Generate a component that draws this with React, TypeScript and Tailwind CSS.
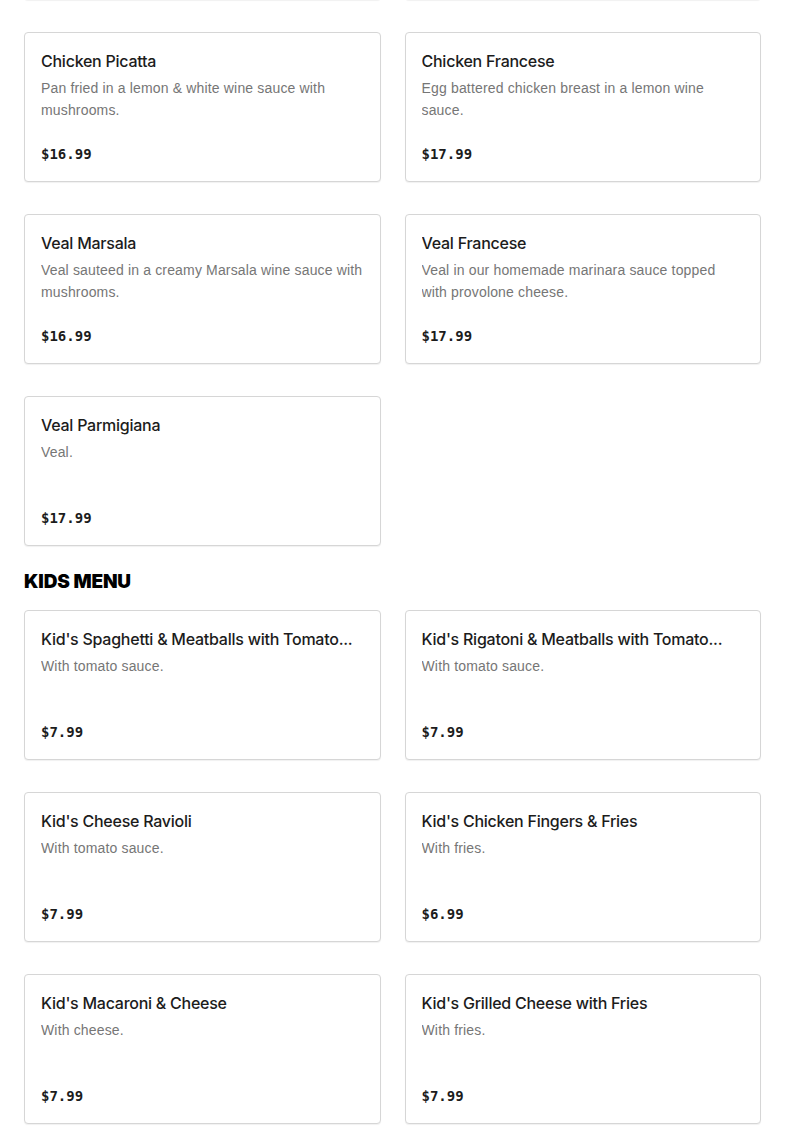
import React from "react";

type Item = { name: string; desc: string; price: string };

const entrees: Item[] = [
  { name: "Chicken Picatta", desc: "Pan fried in a lemon & white wine sauce with mushrooms.", price: "$16.99" },
  { name: "Chicken Francese", desc: "Egg battered chicken breast in a lemon wine sauce.", price: "$17.99" },
  { name: "Veal Marsala", desc: "Veal sauteed in a creamy Marsala wine sauce with mushrooms.", price: "$16.99" },
  { name: "Veal Francese", desc: "Veal in our homemade marinara sauce topped with provolone cheese.", price: "$17.99" },
  { name: "Veal Parmigiana", desc: "Veal.", price: "$17.99" },
];

const kids: Item[] = [
  { name: "Kid's Spaghetti & Meatballs with Tomato...", desc: "With tomato sauce.", price: "$7.99" },
  { name: "Kid's Rigatoni & Meatballs with Tomato...", desc: "With tomato sauce.", price: "$7.99" },
  { name: "Kid's Cheese Ravioli", desc: "With tomato sauce.", price: "$7.99" },
  { name: "Kid's Chicken Fingers & Fries", desc: "With fries.", price: "$6.99" },
  { name: "Kid's Macaroni & Cheese", desc: "With cheese.", price: "$7.99" },
  { name: "Kid's Grilled Cheese with Fries", desc: "With fries.", price: "$7.99" },
];

const cardBox =
  "flex h-[150px] min-w-0 flex-col rounded-[4px] border border-[#d6d6d6] bg-white px-4 pt-4 pb-4 shadow-[0_1px_1px_rgba(0,0,0,0.06)]";

function Card({ item }: { item: Item }) {
  return (
    <div className={cardBox}>
      <div className="truncate font-['Inter','Liberation_Sans',sans-serif] text-[16px] font-medium leading-6 tracking-[-0.25px] text-[#1c1c1c]">
        {item.name}
      </div>
      <div className="mt-1 line-clamp-2 font-['Liberation_Sans',sans-serif] text-[14px] leading-[22px] tracking-[0.16px] text-[#767676]">
        {item.desc}
      </div>
      <div className="mt-auto font-['DejaVu_Sans_Mono',monospace] text-[14px] font-bold leading-[22px] text-[#1c1c1c]">
        {item.price}
      </div>
    </div>
  );
}

export default function App() {
  return (
    <div className="h-[1132px] overflow-hidden bg-white px-6">
      <div className="-mt-[150px] grid grid-cols-2 gap-x-6 gap-y-8">
        <div className={cardBox} />
        <div className={cardBox} />
        {entrees.map((it) => (
          <Card key={it.name} item={it} />
        ))}
      </div>
      <h2 className="mt-6 font-['Inter','Liberation_Sans',sans-serif] text-[19px] font-black leading-6 tracking-[-0.15px] text-black">
        KIDS MENU
      </h2>
      <div className="mt-4 grid grid-cols-2 gap-x-6 gap-y-8">
        {kids.map((it) => (
          <Card key={it.name} item={it} />
        ))}
      </div>
    </div>
  );
}
